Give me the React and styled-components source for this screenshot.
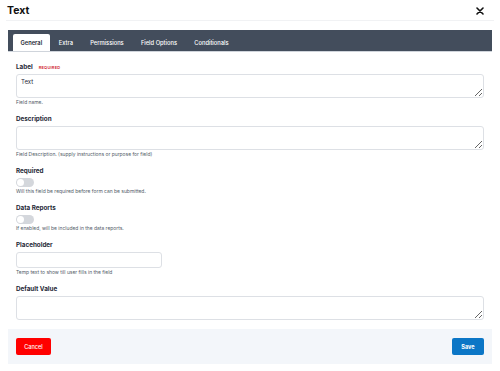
import React from "react";
import styled, { createGlobalStyle } from "styled-components";

const Global = createGlobalStyle`
  html, body { margin: 0; padding: 0; background: #ffffff; }
  body { font-family: Inter, "Noto Sans", Arial, sans-serif; color: #1f2937; }
  * { box-sizing: border-box; }
`;

const Modal = styled.div`
  width: 500px;
  height: 371px;
  background: #fff;
  display: flex;
  flex-direction: column;
`;

const Header = styled.div`
  display: flex;
  align-items: center;
  justify-content: space-between;
  height: 21px;
  margin: 0 6px;
  padding: 2px 0 0 1px;
  border-bottom: 1px solid #f1f2f4;
`;

const Title = styled.h1`
  margin: 0;
  font-size: 10.5px;
  font-weight: 700;
  color: #111;
  line-height: 1;
`;

const Close = styled.button`
  border: 0;
  background: none;
  padding: 0;
  margin-right: 10px;
  width: 8px;
  height: 8px;
  display: flex;
  color: #111;
`;

const Body = styled.div`
  padding: 0 8px;
  margin-top: 9px;
`;

const TabBar = styled.div`
  height: 22px;
  background: #434d5c;
  display: flex;
  align-items: flex-end;
  padding-left: 5px;
  border-bottom: 1px solid #cfd4db;
`;

const Tab = styled.div`
  height: 17px;
  display: flex;
  align-items: center;
  padding: 0 ${p => (p.$active ? "7.5px" : "8.6px")};
  margin-right: ${p => (p.$active ? "0.5px" : "0")};
  font-size: 5.75px;
  font-weight: ${p => (p.$active ? 600 : 500)};
  color: ${p => (p.$active ? "#1f2937" : "#ffffff")};
  background: ${p => (p.$active ? "#ffffff" : "transparent")};
  border-radius: 2px 2px 0 0;
`;

const Form = styled.div`
  padding: 10px 8px 0;
  display: flex;
  flex-direction: column;
  gap: 9px;
`;

const Field = styled.div`
  display: flex;
  flex-direction: column;
`;

const Label = styled.div`
  height: 10px;
  display: flex;
  align-items: center;
  gap: 6px;
  font-size: 6.3px;
  font-weight: 700;
  color: #1f2937;
  margin-bottom: 2px;
`;

const Req = styled.span`
  font-size: 4px;
  font-weight: 600;
  color: #d0202e;
  letter-spacing: 0.2px;
`;

const Area = styled.textarea`
  width: 468px;
  height: 24px;
  border: 1px solid #dde0e5;
  border-radius: 3px;
  padding: 3px 4px;
  font-family: inherit;
  font-size: 6px;
  color: #1f2937;
  resize: vertical;
  outline: none;
  display: block;
`;

const Input = styled.input`
  width: 146px;
  height: 16px;
  border: 1px solid #dde0e5;
  border-radius: 3px;
  padding: 0 5px;
  font-size: 6px;
  outline: none;
  display: block;
`;

const Help = styled.div`
  height: 6px;
  margin-top: 1px;
  font-size: 4.95px;
  line-height: 6px;
  color: #525b68;
`;

const Toggle = styled.div`
  width: 18px;
  height: 9px;
  border-radius: 5px;
  background: #d4d7dc;
  position: relative;
  &::after {
    content: "";
    position: absolute;
    left: 1px;
    top: 1px;
    width: 7px;
    height: 7px;
    border-radius: 50%;
    background: #fff;
  }
`;

const Footer = styled.div`
  margin-top: 9px;
  height: 35px;
  background: #f3f6fa;
  display: flex;
  align-items: center;
  justify-content: space-between;
  padding: 0 8px;
`;

const Btn = styled.button`
  height: 17px;
  width: ${p => p.$w}px;
  border: 0;
  border-radius: 2px;
  font-family: inherit;
  font-size: 5.6px;
  font-weight: ${p => (p.$primary ? 700 : 500)};
  color: #fff;
  background: ${p => (p.$primary ? "#0b76c6" : "#ff0000")};
  padding: 0;
`;

export default function App() {
  return (
    <>
      <Global />
      <Modal>
        <Header>
          <Title>Text</Title>
          <Close aria-label="close">
            <svg width="8" height="8" viewBox="0 0 8 8">
              <path d="M1 1L7 7M7 1L1 7" stroke="#111" strokeWidth="1.6" strokeLinecap="round" />
            </svg>
          </Close>
        </Header>
        <Body>
          <TabBar>
            <Tab $active>General</Tab>
            <Tab>Extra</Tab>
            <Tab>Permissions</Tab>
            <Tab>Field Options</Tab>
            <Tab>Conditionals</Tab>
          </TabBar>
          <Form>
            <Field>
              <Label>Label <Req>REQUIRED</Req></Label>
              <Area defaultValue="Text" />
              <Help>Field name.</Help>
            </Field>
            <Field>
              <Label>Description</Label>
              <Area />
              <Help>Field Description. (supply instructions or purpose for field)</Help>
            </Field>
            <Field>
              <Label>Required</Label>
              <Toggle />
              <Help>Will this field be required before form can be submitted.</Help>
            </Field>
            <Field>
              <Label>Data Reports</Label>
              <Toggle />
              <Help>If enabled, will be included in the data reports.</Help>
            </Field>
            <Field>
              <Label>Placeholder</Label>
              <Input />
              <Help>Temp text to show till user fills in the field</Help>
            </Field>
            <Field>
              <Label>Default Value</Label>
              <Area />
            </Field>
          </Form>
          <Footer>
            <Btn $w={35}>Cancel</Btn>
            <Btn $w={32} $primary>Save</Btn>
          </Footer>
        </Body>
      </Modal>
    </>
  );
}
